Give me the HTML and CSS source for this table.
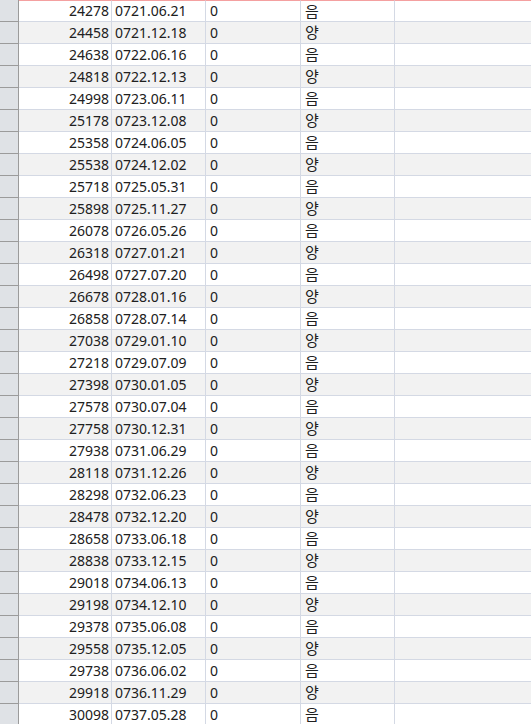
FILE: index.html
```html
<!DOCTYPE html>
<html lang="ko">
<head>
<meta charset="utf-8">
<link rel="stylesheet" href="styles.css">
</head>
<body>
<div class="sheet">
  <div class="row first"><div class="hdr"></div><div class="c a">24278</div><div class="c b">0721.06.21</div><div class="c cc">0</div><div class="c d">음</div><div class="c e"></div></div>
  <div class="row"><div class="hdr"></div><div class="c a">24458</div><div class="c b">0721.12.18</div><div class="c cc">0</div><div class="c d">양</div><div class="c e"></div></div>
  <div class="row"><div class="hdr"></div><div class="c a">24638</div><div class="c b">0722.06.16</div><div class="c cc">0</div><div class="c d">음</div><div class="c e"></div></div>
  <div class="row"><div class="hdr"></div><div class="c a">24818</div><div class="c b">0722.12.13</div><div class="c cc">0</div><div class="c d">양</div><div class="c e"></div></div>
  <div class="row"><div class="hdr"></div><div class="c a">24998</div><div class="c b">0723.06.11</div><div class="c cc">0</div><div class="c d">음</div><div class="c e"></div></div>
  <div class="row"><div class="hdr"></div><div class="c a">25178</div><div class="c b">0723.12.08</div><div class="c cc">0</div><div class="c d">양</div><div class="c e"></div></div>
  <div class="row"><div class="hdr"></div><div class="c a">25358</div><div class="c b">0724.06.05</div><div class="c cc">0</div><div class="c d">음</div><div class="c e"></div></div>
  <div class="row"><div class="hdr"></div><div class="c a">25538</div><div class="c b">0724.12.02</div><div class="c cc">0</div><div class="c d">양</div><div class="c e"></div></div>
  <div class="row"><div class="hdr"></div><div class="c a">25718</div><div class="c b">0725.05.31</div><div class="c cc">0</div><div class="c d">음</div><div class="c e"></div></div>
  <div class="row"><div class="hdr"></div><div class="c a">25898</div><div class="c b">0725.11.27</div><div class="c cc">0</div><div class="c d">양</div><div class="c e"></div></div>
  <div class="row"><div class="hdr"></div><div class="c a">26078</div><div class="c b">0726.05.26</div><div class="c cc">0</div><div class="c d">음</div><div class="c e"></div></div>
  <div class="row"><div class="hdr"></div><div class="c a">26318</div><div class="c b">0727.01.21</div><div class="c cc">0</div><div class="c d">양</div><div class="c e"></div></div>
  <div class="row"><div class="hdr"></div><div class="c a">26498</div><div class="c b">0727.07.20</div><div class="c cc">0</div><div class="c d">음</div><div class="c e"></div></div>
  <div class="row"><div class="hdr"></div><div class="c a">26678</div><div class="c b">0728.01.16</div><div class="c cc">0</div><div class="c d">양</div><div class="c e"></div></div>
  <div class="row"><div class="hdr"></div><div class="c a">26858</div><div class="c b">0728.07.14</div><div class="c cc">0</div><div class="c d">음</div><div class="c e"></div></div>
  <div class="row"><div class="hdr"></div><div class="c a">27038</div><div class="c b">0729.01.10</div><div class="c cc">0</div><div class="c d">양</div><div class="c e"></div></div>
  <div class="row"><div class="hdr"></div><div class="c a">27218</div><div class="c b">0729.07.09</div><div class="c cc">0</div><div class="c d">음</div><div class="c e"></div></div>
  <div class="row"><div class="hdr"></div><div class="c a">27398</div><div class="c b">0730.01.05</div><div class="c cc">0</div><div class="c d">양</div><div class="c e"></div></div>
  <div class="row"><div class="hdr"></div><div class="c a">27578</div><div class="c b">0730.07.04</div><div class="c cc">0</div><div class="c d">음</div><div class="c e"></div></div>
  <div class="row"><div class="hdr"></div><div class="c a">27758</div><div class="c b">0730.12.31</div><div class="c cc">0</div><div class="c d">양</div><div class="c e"></div></div>
  <div class="row"><div class="hdr"></div><div class="c a">27938</div><div class="c b">0731.06.29</div><div class="c cc">0</div><div class="c d">음</div><div class="c e"></div></div>
  <div class="row"><div class="hdr"></div><div class="c a">28118</div><div class="c b">0731.12.26</div><div class="c cc">0</div><div class="c d">양</div><div class="c e"></div></div>
  <div class="row"><div class="hdr"></div><div class="c a">28298</div><div class="c b">0732.06.23</div><div class="c cc">0</div><div class="c d">음</div><div class="c e"></div></div>
  <div class="row"><div class="hdr"></div><div class="c a">28478</div><div class="c b">0732.12.20</div><div class="c cc">0</div><div class="c d">양</div><div class="c e"></div></div>
  <div class="row"><div class="hdr"></div><div class="c a">28658</div><div class="c b">0733.06.18</div><div class="c cc">0</div><div class="c d">음</div><div class="c e"></div></div>
  <div class="row"><div class="hdr"></div><div class="c a">28838</div><div class="c b">0733.12.15</div><div class="c cc">0</div><div class="c d">양</div><div class="c e"></div></div>
  <div class="row"><div class="hdr"></div><div class="c a">29018</div><div class="c b">0734.06.13</div><div class="c cc">0</div><div class="c d">음</div><div class="c e"></div></div>
  <div class="row"><div class="hdr"></div><div class="c a">29198</div><div class="c b">0734.12.10</div><div class="c cc">0</div><div class="c d">양</div><div class="c e"></div></div>
  <div class="row"><div class="hdr"></div><div class="c a">29378</div><div class="c b">0735.06.08</div><div class="c cc">0</div><div class="c d">음</div><div class="c e"></div></div>
  <div class="row"><div class="hdr"></div><div class="c a">29558</div><div class="c b">0735.12.05</div><div class="c cc">0</div><div class="c d">양</div><div class="c e"></div></div>
  <div class="row"><div class="hdr"></div><div class="c a">29738</div><div class="c b">0736.06.02</div><div class="c cc">0</div><div class="c d">음</div><div class="c e"></div></div>
  <div class="row"><div class="hdr"></div><div class="c a">29918</div><div class="c b">0736.11.29</div><div class="c cc">0</div><div class="c d">양</div><div class="c e"></div></div>
  <div class="row"><div class="hdr"></div><div class="c a">30098</div><div class="c b">0737.05.28</div><div class="c cc">0</div><div class="c d">음</div><div class="c e"></div></div>
</div>
</body>
</html>
```
FILE: styles.css
```css
html, body {
  margin: 0;
  padding: 0;
  background: #ffffff;
  overflow: hidden;
}
.sheet {
  display: flex;
  flex-direction: column;
  width: 531px;
  font-family: "Noto Sans", "Noto Sans CJK KR", sans-serif;
  font-size: 14px;
  color: #202020;
}
.row {
  display: flex;
  height: 22px;
  flex: none;
}
.row:nth-child(even) .c {
  background: #f2f2f2;
}
.hdr {
  flex: none;
  box-sizing: border-box;
  width: 19px;
  background: #dfe2e6;
  border-right: 1px solid #9b9b9b;
  border-bottom: 1px solid #9b9b9b;
}
.c {
  flex: none;
  box-sizing: border-box;
  height: 22px;
  border-right: 1px solid #d4d9e4;
  border-bottom: 1px solid #d4d9e4;
  background: #ffffff;
  line-height: 21px;
  white-space: nowrap;
  overflow: hidden;
}
.first .c {
  border-top: 1px solid #f4a0a0;
  line-height: 20px;
}
.a { width: 93px; text-align: right; padding-right: 2px; }
.b { width: 94px; padding-left: 3px; }
.cc { width: 95px; padding-left: 4px; }
.d { width: 94px; padding-left: 4px; font-size: 15px; }
.e { flex: 1 1 auto; border-right: none; }
```
